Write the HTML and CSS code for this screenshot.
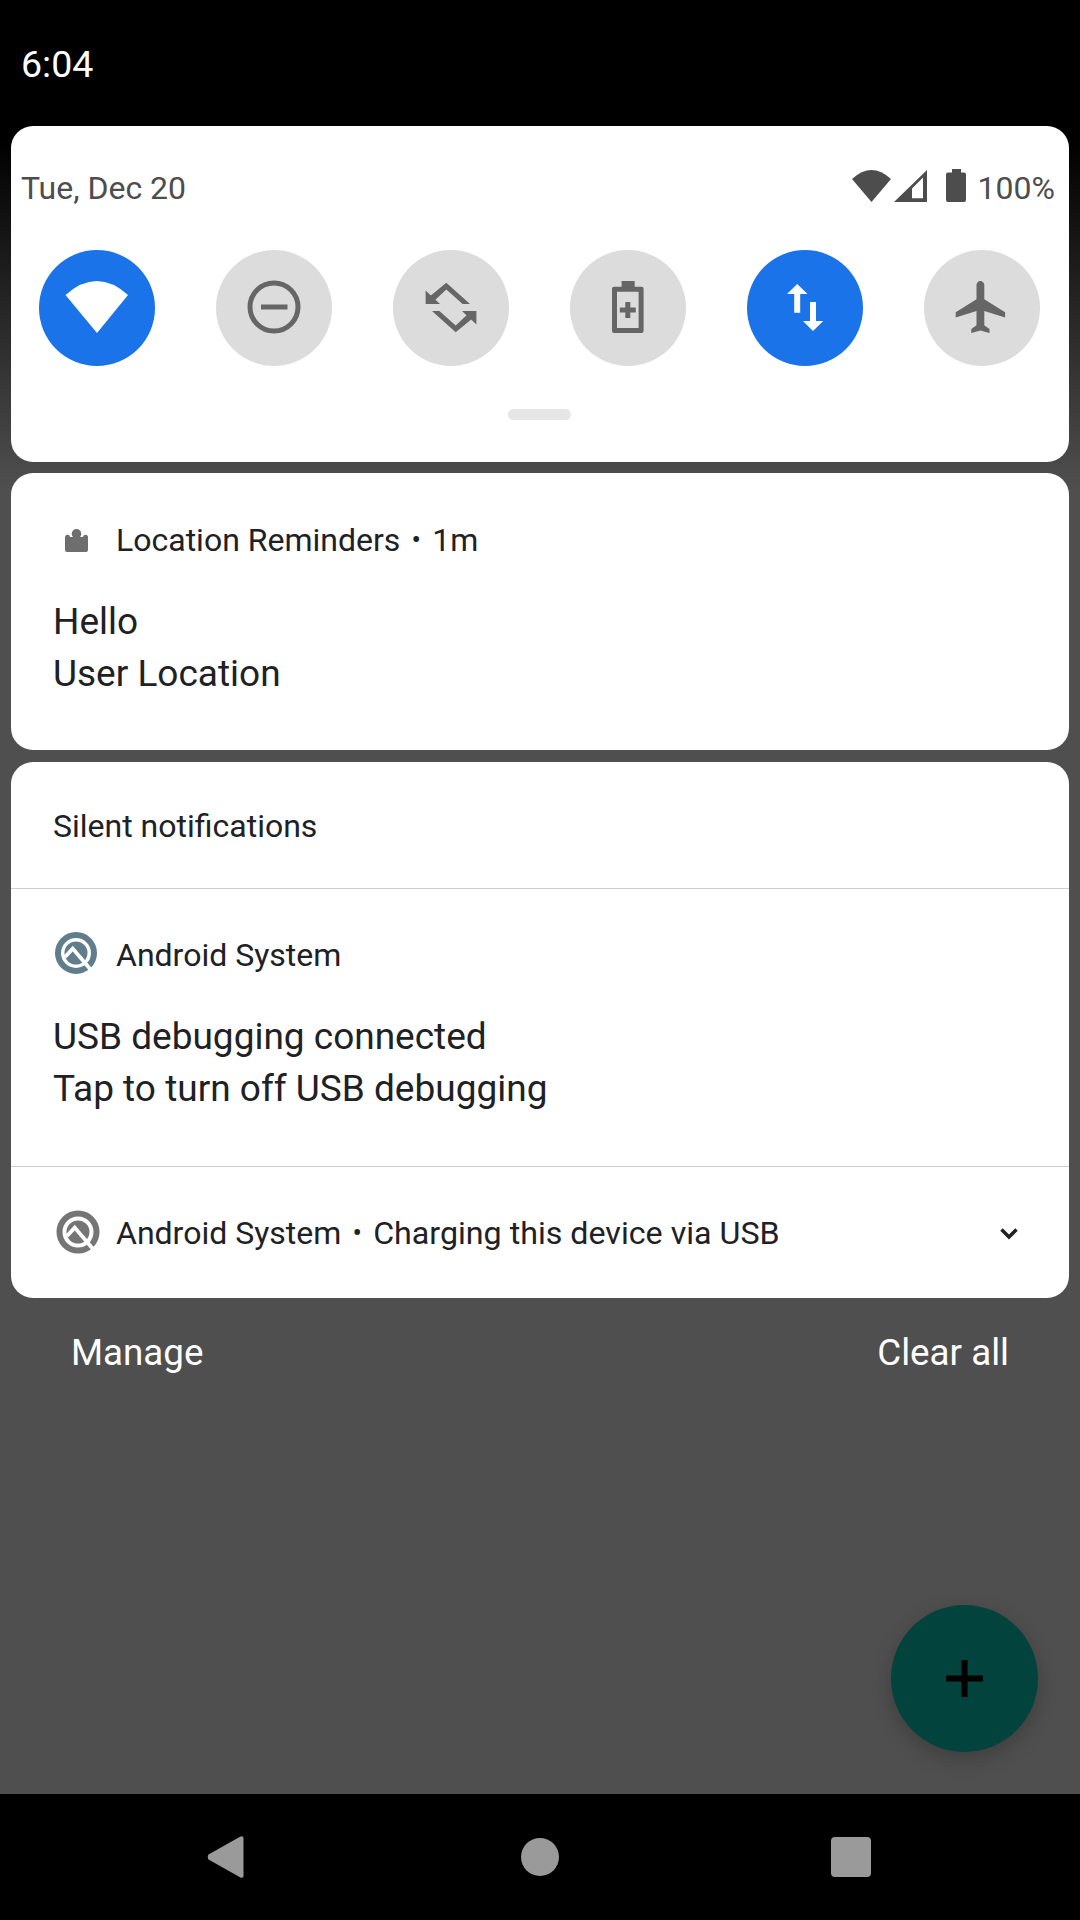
FILE: index.html
```html
<!DOCTYPE html>
<html lang="en">
<head>
<meta charset="utf-8">
<title>Notification shade</title>
<link rel="stylesheet" href="styles.css">
</head>
<body>
<div class="screen">
  <header class="status"><span class="time">6:04</span></header>

  <section class="card qs">
    <div class="qs-head">
      <span class="date">Tue, Dec 20</span>
      <div class="sys">
        <svg class="sys-wifi" width="39" height="32" viewBox="0 0 39 32"><path class="ink" d="M0 9Q19.500 -9 39 9L19.500 32Z"/></svg>
        <svg class="sys-signal" width="33" height="32" viewBox="0 0 33 32"><path class="ink" fill-rule="evenodd" d="M33 0V32H0ZM29 7.500L18 18.500V28.300H29Z"/></svg>
        <svg class="sys-batt" width="20" height="33" viewBox="0 0 20 33"><path class="ink" d="M6 0H15V3.500H18Q20 3.500 20 5.500V31Q20 33 18 33H2Q0 33 0 31V5.500Q0 3.500 2 3.500H6Z"/></svg>
        <span class="pct">100%</span>
      </div>
    </div>
    <div class="tiles">
      <div class="tile on">
        <svg width="116" height="116" viewBox="0 0 116 116"><path class="w" d="M26.500 45Q58 17 89 45L58 83Z"/></svg>
      </div>
      <div class="tile">
        <svg width="116" height="116" viewBox="0 0 116 116"><circle class="ring" cx="58" cy="57" r="24"/><rect class="g" x="45" y="54.500" width="26.500" height="5"/></svg>
      </div>
      <div class="tile">
        <svg width="116" height="116" viewBox="0 0 116 116">
          <g id="rot"><path class="g" d="M53.300 32.700L77 54H69.600L53.300 39.600L40.500 51.500L36 47Z"/><path class="g" d="M32.600 40.500L47 54H32.600Z"/></g>
          <use href="#rot" transform="rotate(180 58 57.500)"/>
        </svg>
      </div>
      <div class="tile">
        <svg width="116" height="116" viewBox="0 0 116 116"><path class="g" fill-rule="evenodd" d="M51.600 31H64.700V36.700H71.600Q73.600 36.700 73.600 38.700V81Q73.600 83 71.600 83H44Q42 83 42 81V38.700Q42 36.700 44 36.700H51.600ZM47 41.700V78H68.600V41.700Z"/><path class="g" d="M55.300 52H60.300V57.500H65.800V62.500H60.300V68H55.300V62.500H49.800V57.500H55.300Z"/></svg>
      </div>
      <div class="tile on">
        <svg width="116" height="116" viewBox="0 0 116 116"><path class="w" d="M50.200 34L60.500 44H53.200V62.700H47.200V44H40Z"/><path class="w" d="M63 52H69V71H76.200L66 81L56 71H63Z"/></svg>
      </div>
      <div class="tile">
        <svg width="116" height="116" viewBox="0 0 116 116"><g transform="translate(26.500 25.800) scale(2.600)"><path class="g" d="M21 16v-2l-8-5V3.500c0-.83-.67-1.500-1.500-1.500S10 2.670 10 3.500V9l-8 5v2l8-2.500V19l-2 1.500V22l3.500-1 3.500 1v-1.500L13 19v-5.500l8 2.500z"/></g></svg>
      </div>
    </div>
    <div class="handle"></div>
  </section>

  <section class="card reminder">
    <div class="app-row">
      <span class="app-icon">
        <svg width="23" height="23" viewBox="0 0 23 23"><g class="g2"><rect y="8" width="23" height="15" rx="2"/><rect y="5.700" width="5" height="8" rx="2.500"/><rect x="18" y="5.700" width="5" height="8" rx="2.500"/><circle cx="11.500" cy="4.800" r="4.800"/><rect x="7" y="8" width="9" height="4"/></g></svg>
      </span>
      <span class="app-name">Location Reminders</span>
      <span class="dot">•</span>
      <span class="app-name">1m</span>
    </div>
    <div class="body-text">
      <div>Hello</div>
      <div>User Location</div>
    </div>
  </section>

  <section class="card silent">
    <div class="silent-head">Silent notifications</div>
    <div class="row usb">
      <div class="app-row">
        <span class="app-icon q-slate">
          <svg width="44" height="44" viewBox="0 0 44 44"><circle class="q-ring" cx="22" cy="22" r="18"/><circle class="q-core" cx="22" cy="22" r="11.500"/><path class="q-cut" d="M11 26L18.700 17.600L37 39"/></svg>
        </span>
        <span class="app-name">Android System</span>
      </div>
      <div class="body-text">
        <div>USB debugging connected</div>
        <div>Tap to turn off USB debugging</div>
      </div>
    </div>
    <div class="row charging">
      <span class="app-icon q-grey">
        <svg width="44" height="44" viewBox="0 0 44 44"><circle class="q-ring" cx="22" cy="22" r="18.500"/><circle class="q-core" cx="22" cy="22" r="11.500"/><path class="q-cut" d="M11 26L18.700 17.600L37 39"/></svg>
      </span>
      <span class="app-name">Android System</span>
      <span class="dot">•</span>
      <span class="app-name detail">Charging this device via USB</span>
      <svg class="chev" width="24" height="24" viewBox="0 0 24 24"><path class="chev-line" d="M4.500 8.500L12 16L19.500 8.500"/></svg>
    </div>
  </section>

  <div class="actions">
    <span>Manage</span>
    <span>Clear all</span>
  </div>

  <nav class="nav">
    <svg class="nav-back" width="37" height="42" viewBox="0 0 37 42"><path class="n" d="M33 .800Q36.500 -1 36.500 2.500V39.500Q36.500 43 33 41.200L1.500 23.500Q0 21 1.500 18.500Z"/></svg>
    <svg class="nav-home" width="38" height="38" viewBox="0 0 38 38"><circle class="n" cx="19" cy="19" r="19"/></svg>
    <svg class="nav-recent" width="40" height="40" viewBox="0 0 40 40"><rect class="n" width="40" height="40" rx="4"/></svg>
  </nav>

  <button class="fab" type="button" aria-label="Add">
    <svg width="37" height="37" viewBox="0 0 37 37"><path d="M15.500 0H21.500V15.500H37V21.500H21.500V37H15.500V21.500H0V15.500H15.500Z"/></svg>
  </button>
</div>
</body>
</html>
```
FILE: styles.css
```css
* { box-sizing: border-box; }
html, body { margin: 0; padding: 0; }
body { width: 1080px; height: 1920px; overflow: hidden; background: #000; }

.screen {
  position: relative;
  width: 1080px;
  height: 1920px;
  display: flex;
  flex-direction: column;
  font-family: Roboto, "Liberation Sans", sans-serif;
  color: #202124;
  background: linear-gradient(#000 0, #000 140px, #4f4f4f 490px, #4f4f4f 100%);
}

.status { height: 126px; flex: none; display: flex; align-items: center; padding: 0 0 0 21px; }
.time { color: #fff; font-size: 37.500px; position: relative; top: 1px; }

.card { flex: none; margin: 0 11px; background: #fff; border-radius: 22px; overflow: hidden; }

.qs { height: 336px; }
.qs-head { height: 124px; padding: 42px 14px 0 10px; display: flex; justify-content: space-between; align-items: flex-start; }
.date, .pct { font-size: 32px; line-height: 40px; color: #4d4d4d; }
.sys { display: flex; align-items: flex-start; }
.sys-wifi { margin-top: 2px; }
.sys-signal { margin: 2px 0 0 3px; }
.sys-batt { margin: 1px 0 0 19px; }
.pct { margin-left: 12px; }
.ink { fill: #4d4d4d; }

.tiles { display: flex; gap: 61px; padding-left: 28px; }
.tile { width: 116px; height: 116px; border-radius: 50%; background: #dcdcdc; flex: none; }
.tile svg { display: block; }
.tile.on { background: #1a73e8; }
.w { fill: #fff; }
.g { fill: #666; }
.g2 { fill: #6e6e6e; }
.ring { fill: none; stroke: #666; stroke-width: 5; }
.handle { width: 63px; height: 11px; border-radius: 6px; background: #e6e6e6; margin: 43px 0 0 497px; }

.reminder { height: 277px; margin-top: 11px; padding-top: 47px; }
.app-row { display: flex; align-items: center; height: 40px; padding-left: 42px; }
.app-icon { width: 63px; flex: none; display: flex; align-items: center; }
.reminder .app-icon { padding-left: 12px; }
.app-name { font-size: 32px; line-height: 40px; color: #202124; white-space: nowrap; }
.detail { font-size: 32.200px; }
.dot { font-size: 28px; line-height: 40px; margin: 0 11.200px; color: #202124; }
.body-text { margin: 35.500px 0 0 42px; font-size: 37px; line-height: 52.600px; color: #202124; }

.silent { height: 536px; margin-top: 12px; }
.silent-head { height: 127px; padding: 44px 0 0 42px; font-size: 32px; line-height: 40px; border-bottom: 1px solid #cfcfcf; }
.row.usb { height: 278px; padding-top: 46px; border-bottom: 1px solid #cfcfcf; }
.row.charging { display: flex; align-items: center; height: 40px; margin-top: 46px; padding: 0 0 0 42px; position: relative; }

.app-icon svg { display: block; }
.q-slate { --q: #607d8b; }
.q-grey { --q: #757575; }
.q-ring { fill: none; stroke: var(--q); stroke-width: 6; }
.q-core { fill: var(--q); }
.q-cut { fill: none; stroke: #fff; stroke-width: 3.800; }
.q-slate svg { margin: -4px 0 0 1px; }
.q-grey svg { margin: -3px 0 0 3px; }

.chev { position: absolute; right: 48px; top: 8px; }
.chev-line { fill: none; stroke: #202124; stroke-width: 3.500; }

.actions { flex: none; display: flex; justify-content: space-between; padding: 33px 71px 0 71px; font-size: 36.750px; line-height: 44px; color: #fff; }

.nav { margin-top: auto; height: 126px; flex: none; background: #000; display: flex; align-items: center; padding-left: 207px; }
.n { fill: #9a9a9a; }
.nav-home { margin-left: 277px; }
.nav-recent { margin-left: 272px; }
.nav svg { flex: none; }

.fab {
  position: absolute;
  left: 891px;
  top: 1605px;
  width: 147px;
  height: 147px;
  padding: 0;
  border: 0;
  border-radius: 50%;
  background: #03433e;
  box-shadow: 0 7px 20px rgba(0, 0, 0, .22);
  display: flex;
  align-items: center;
  justify-content: center;
}
.fab svg { display: block; fill: #000; }
```
